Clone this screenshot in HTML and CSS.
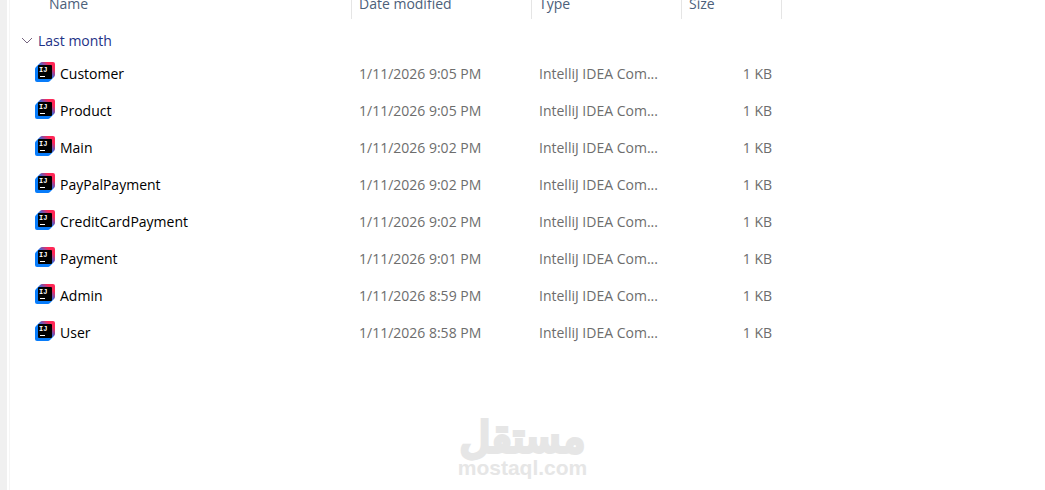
FILE: index.html
```html
<!DOCTYPE html>
<html lang="en">
<head>
	<meta charset="UTF-8">
	<title>Files</title>
	<link rel="stylesheet" href="styles.css">
</head>
<body>
	<svg class="defs" aria-hidden="true">
		<defs>
			<linearGradient id="shine" gradientUnits="userSpaceOnUse" x1="10" y1="10" x2="16" y2="4">
				<stop offset="0" stop-color="#087cfa" />
				<stop offset="0.4" stop-color="#6b57b8" />
				<stop offset="1" stop-color="#fe2857" />
			</linearGradient>
		</defs>
		<symbol id="idea" viewBox="0 0 20 20">
			<path d="M0 7 Q0 6 1 5 L5 1 Q6 0 7 0 H18 Q20 0 20 2 V13 Q20 14 19 15 L15 19 Q14 20 13 20 H2 Q0 20 0 18 Z" fill="url(#shine)" />
			<rect x="3" y="3" width="14" height="14" rx="1" fill="#000" />
			<text x="4" y="10" class="idea-text">IJ</text>
			<rect x="5" y="14" width="5" height="1" fill="#fff" />
		</symbol>
	</svg>

	<div class="window">
		<div class="splitter"></div>
		<main class="files">
			<table class="list">
				<colgroup>
					<col class="col-name">
					<col class="col-date">
					<col class="col-type">
					<col class="col-size">
				</colgroup>
				<thead>
					<tr>
						<th class="name" scope="col">Name</th>
						<th scope="col">Date modified</th>
						<th scope="col">Type</th>
						<th scope="col">Size</th>
					</tr>
				</thead>
				<tbody>
					<tr class="group">
						<th colspan="4" scope="rowgroup">
							<button type="button" aria-expanded="true"><svg class="chevron" viewBox="0 0 12 8" aria-hidden="true"><path d="M1 1 L6 6 L11 1" /></svg>Last month</button>
						</th>
					</tr>
					<tr>
						<td><div class="file"><svg class="icon"><use href="#idea" /></svg><span>Customer</span></div></td>
						<td>1/11/2026 9:05 PM</td>
						<td>IntelliJ IDEA Com...</td>
						<td class="size">1 KB</td>
					</tr>
					<tr>
						<td><div class="file"><svg class="icon"><use href="#idea" /></svg><span>Product</span></div></td>
						<td>1/11/2026 9:05 PM</td>
						<td>IntelliJ IDEA Com...</td>
						<td class="size">1 KB</td>
					</tr>
					<tr>
						<td><div class="file"><svg class="icon"><use href="#idea" /></svg><span>Main</span></div></td>
						<td>1/11/2026 9:02 PM</td>
						<td>IntelliJ IDEA Com...</td>
						<td class="size">1 KB</td>
					</tr>
					<tr>
						<td><div class="file"><svg class="icon"><use href="#idea" /></svg><span>PayPalPayment</span></div></td>
						<td>1/11/2026 9:02 PM</td>
						<td>IntelliJ IDEA Com...</td>
						<td class="size">1 KB</td>
					</tr>
					<tr>
						<td><div class="file"><svg class="icon"><use href="#idea" /></svg><span>CreditCardPayment</span></div></td>
						<td>1/11/2026 9:02 PM</td>
						<td>IntelliJ IDEA Com...</td>
						<td class="size">1 KB</td>
					</tr>
					<tr>
						<td><div class="file"><svg class="icon"><use href="#idea" /></svg><span>Payment</span></div></td>
						<td>1/11/2026 9:01 PM</td>
						<td>IntelliJ IDEA Com...</td>
						<td class="size">1 KB</td>
					</tr>
					<tr>
						<td><div class="file"><svg class="icon"><use href="#idea" /></svg><span>Admin</span></div></td>
						<td>1/11/2026 8:59 PM</td>
						<td>IntelliJ IDEA Com...</td>
						<td class="size">1 KB</td>
					</tr>
					<tr>
						<td><div class="file"><svg class="icon"><use href="#idea" /></svg><span>User</span></div></td>
						<td>1/11/2026 8:58 PM</td>
						<td>IntelliJ IDEA Com...</td>
						<td class="size">1 KB</td>
					</tr>
				</tbody>
			</table>
		</main>
	</div>

	<div class="watermark">
		<div class="mark" lang="ar" dir="rtl">مستقل</div>
		<div class="site">mostaql.com</div>
	</div>
</body>
</html>
```
FILE: styles.css
```css
body {
	margin: 0;
	background: #fff;
	color: #000;
	font-family: "Segoe UI", "Open Sans", "Noto Sans", sans-serif;
	font-size: 14px;
	line-height: 20px;
}

.defs {
	position: absolute;
	width: 0;
	height: 0;
}

.window {
	display: flex;
	min-height: 100vh;
}

.splitter {
	width: 7px;
	background: #f0f0f0;
}

.files {
	flex: 1;
	margin-left: 2px;
	border-left: 1px solid #f5f5f5;
}

.list {
	width: 772px;
	table-layout: fixed;
	border-collapse: separate;
	border-spacing: 0;
}

.col-name {
	width: 342px;
}

.col-date {
	width: 180px;
}

.col-type {
	width: 150px;
}

.col-size {
	width: 100px;
}

/* the header is scrolled half out of view */
thead th {
	box-sizing: border-box;
	height: 19px;
	padding: 0 7px;
	border-right: 1px solid #e5e5e5;
	color: #4c607a;
	font-weight: 400;
	line-height: 8px;
	text-align: left;
	vertical-align: top;
}

thead .name {
	padding-left: 39px;
}

td {
	height: 37px;
	padding: 0 7px;
	color: #6d6d6d;
	white-space: nowrap;
}

td:first-child {
	padding-left: 25px;
	color: #000;
}

.size {
	padding-right: 10px;
	text-align: right;
}

.group th {
	height: 28px;
	padding: 8px 0 0 11px;
	text-align: left;
}

.group button {
	display: flex;
	align-items: center;
	gap: 5px;
	padding: 0;
	border: 0;
	background: none;
	color: #1e3287;
	font: inherit;
	font-weight: 400;
}

.chevron {
	width: 12px;
	height: 8px;
	fill: none;
	stroke: #75657f;
}

.file {
	display: flex;
	gap: 5px;
}

.icon {
	width: 20px;
	height: 20px;
	margin-top: -2px;
}

.idea-text {
	fill: #fff;
	font: bold 7px "Liberation Mono", monospace;
}

.watermark {
	position: absolute;
	right: 0;
	bottom: 10px;
	left: 0;
	color: #e6e6e6;
	font-weight: 700;
	text-align: center;
	pointer-events: none;
}

.mark {
	font-family: "DejaVu Sans", sans-serif;
	font-size: 42px;
	font-weight: 400;
	line-height: 36px;
	-webkit-text-stroke: 4px #e6e6e6;
}

.site {
	font-family: "Liberation Sans", Arial, sans-serif;
	font-size: 21px;
	line-height: 24px;
}
```
